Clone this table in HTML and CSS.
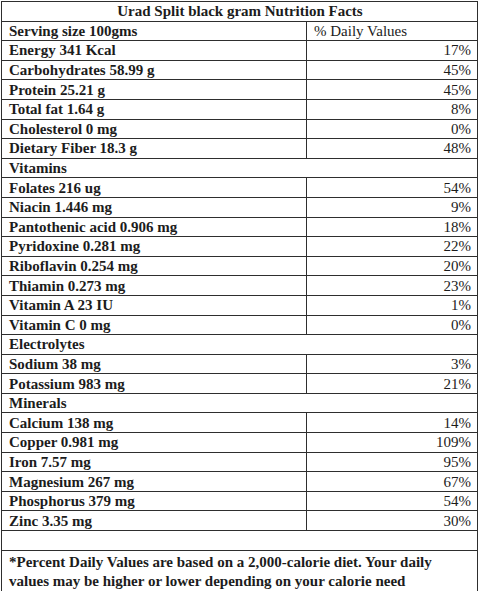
FILE: index.html
```html
<!DOCTYPE html>
<html lang="en">
<head>
    <meta charset="UTF-8">
    <title>Urad Split black gram Nutrition Facts</title>
    <link rel="stylesheet" href="styles.css">
</head>
<body>
    <table class="facts">
        <colgroup>
            <col class="col-name">
            <col class="col-dv">
        </colgroup>
        <tr><th colspan="2" class="title">Urad Split black gram Nutrition Facts</th></tr>
        <tr><td class="name">Serving size 100gms</td><td class="dv-head">% Daily Values</td></tr>
        <tr><td class="name">Energy 341 Kcal</td><td class="dv">17%</td></tr>
        <tr><td class="name">Carbohydrates 58.99 g</td><td class="dv">45%</td></tr>
        <tr><td class="name">Protein 25.21 g</td><td class="dv">45%</td></tr>
        <tr><td class="name">Total fat 1.64 g</td><td class="dv">8%</td></tr>
        <tr><td class="name">Cholesterol 0 mg</td><td class="dv">0%</td></tr>
        <tr><td class="name">Dietary Fiber 18.3 g</td><td class="dv">48%</td></tr>
        <tr><td colspan="2" class="name">Vitamins</td></tr>
        <tr><td class="name">Folates 216 ug</td><td class="dv">54%</td></tr>
        <tr><td class="name">Niacin 1.446 mg</td><td class="dv">9%</td></tr>
        <tr><td class="name">Pantothenic acid 0.906 mg</td><td class="dv">18%</td></tr>
        <tr><td class="name">Pyridoxine 0.281 mg</td><td class="dv">22%</td></tr>
        <tr><td class="name">Riboflavin 0.254 mg</td><td class="dv">20%</td></tr>
        <tr><td class="name">Thiamin 0.273 mg</td><td class="dv">23%</td></tr>
        <tr><td class="name">Vitamin A 23 IU</td><td class="dv">1%</td></tr>
        <tr><td class="name">Vitamin C 0 mg</td><td class="dv">0%</td></tr>
        <tr><td colspan="2" class="name">Electrolytes</td></tr>
        <tr><td class="name">Sodium 38 mg</td><td class="dv">3%</td></tr>
        <tr><td class="name">Potassium 983 mg</td><td class="dv">21%</td></tr>
        <tr><td colspan="2" class="name">Minerals</td></tr>
        <tr><td class="name">Calcium 138 mg</td><td class="dv">14%</td></tr>
        <tr><td class="name">Copper 0.981 mg</td><td class="dv">109%</td></tr>
        <tr><td class="name">Iron 7.57 mg</td><td class="dv">95%</td></tr>
        <tr><td class="name">Magnesium 267 mg</td><td class="dv">67%</td></tr>
        <tr><td class="name">Phosphorus 379 mg</td><td class="dv">54%</td></tr>
        <tr><td class="name">Zinc 3.35 mg</td><td class="dv">30%</td></tr>
        <tr><td colspan="2" class="blank"></td></tr>
        <tr><td colspan="2" class="note">*Percent Daily Values are based on a 2,000-calorie diet. Your daily values may be higher or lower depending on your calorie need</td></tr>
    </table>
</body>
</html>
```

FILE: styles.css
```css
* {
    box-sizing: border-box;
    margin: 0;
    padding: 0;
}

body {
    background: #fff;
    color: #1c1c1c;
    font-family: "Liberation Serif", "Times New Roman", serif;
    padding: 1px 0 0 1px;
}

.facts {
    width: 477px;
    border-collapse: collapse;
    table-layout: fixed;
    font-size: 15px;
    line-height: 18px;
}

.col-name {
    width: 305px;
}

.facts th,
.facts td {
    border: 1px solid #2e2e2e;
    height: 19.6px;
    padding: 0 6px 0 7px;
    vertical-align: middle;
    white-space: nowrap;
}

.title {
    font-weight: bold;
    text-align: center;
}

.name {
    font-weight: bold;
}

.dv-head {
    font-weight: normal;
}

.dv {
    text-align: right;
}

.facts .blank {
    height: 20px;
}

.facts .note {
    font-weight: bold;
    white-space: normal;
    line-height: 19px;
    height: 41px;
    padding-top: 1px;
}
```
